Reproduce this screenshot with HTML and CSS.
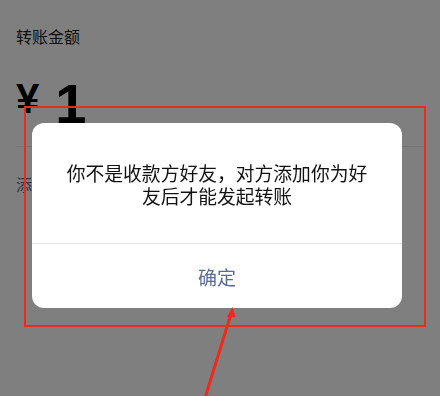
FILE: index.html
```html
<!DOCTYPE html>
<html lang="zh-CN">
<head>
  <meta charset="UTF-8">
  <meta name="viewport" content="width=device-width, initial-scale=1.0">
  <title>转账</title>
  <link rel="stylesheet" href="styles.css">
</head>
<body>
  <main class="page">
    <div class="label">转账金额</div>
    <div class="amount">
      <span class="currency">¥</span>
      <span class="value">1</span>
    </div>
    <div class="remark">添加转账说明</div>
  </main>

  <div class="mask"></div>

  <div class="dialog">
    <div class="dialog-body">你不是收款方好友，对方添加你为好友后才能发起转账</div>
    <button class="dialog-btn">确定</button>
  </div>

  <!-- 标注 -->
  <div class="mark-box"></div>
  <svg class="mark-arrow" width="440" height="396" viewBox="0 0 440 396">
    <line x1="205" y1="398" x2="231" y2="314" stroke="#f0291a" stroke-width="3" />
    <polygon points="232.5,307 227,317 235.5,317" fill="#f0291a" />
  </svg>
</body>
</html>
```

FILE: styles.css
```css
body {
  margin: 0;
  font-family: "Noto Sans CJK SC", "Liberation Sans", sans-serif;
  background-color: #fff;
  overflow: hidden;
}
.page {
  padding: 24px 16px 0;
}
.label {
  font-size: 16px;
  line-height: 24px;
  color: #222;
}
.amount {
  display: flex;
  align-items: flex-start;
  margin-top: 28px;
  padding-bottom: 14px;
  border-bottom: 1px solid #e5e5e5;
  font-family: "Liberation Sans", sans-serif;
  font-weight: bold;
  line-height: 1;
  color: #000;
}
.currency {
  margin-top: 2px;
  font-size: 42px;
}
.value {
  margin-left: 16px;
  font-size: 56px;
}
.remark {
  margin-top: 25px;
  font-size: 16px;
  line-height: 24px;
  color: #576b95;
}
.mask {
  position: fixed;
  inset: 0;
  background-color: rgba(0, 0, 0, 0.5);
}
.dialog {
  position: absolute;
  left: 32px;
  top: 123px;
  width: 370px;
  background-color: #fff;
  border-radius: 12px;
  overflow: hidden;
}
.dialog-body {
  padding: 38px 32px 36px;
  font-size: 18.8px;
  line-height: 23px;
  color: #111;
  text-align: center;
}
.dialog-btn {
  display: block;
  width: 100%;
  height: 65px;
  padding: 0;
  border: none;
  border-top: 1px solid #e5e5e5;
  background: none;
  font-family: inherit;
  font-size: 19px;
  color: #576b95;
}
.mark-box {
  position: absolute;
  left: 24px;
  top: 106px;
  width: 398px;
  height: 217px;
  border: 2px solid #ee2a1c;
}
.mark-arrow {
  position: absolute;
  left: 0;
  top: 0;
}
```
